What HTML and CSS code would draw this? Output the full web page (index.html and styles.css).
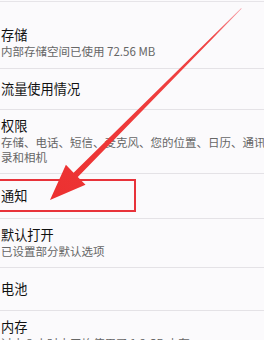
FILE: index.html
```html
<!DOCTYPE html>
<html lang="zh">
<head>
<meta charset="utf-8">
<link rel="stylesheet" href="styles.css">
</head>
<body>
<div class="screen">
  <div class="list">
    <div class="row row-first">
      <div class="title">存储</div>
      <div class="sub">内部存储空间已使用 72.56 MB</div>
    </div>
    <div class="row row-single">
      <div class="title">流量使用情况</div>
    </div>
    <div class="row">
      <div class="title">权限</div>
      <div class="sub">存储、电话、短信、麦克风、您的位置、日历、通讯录和相机</div>
    </div>
    <div class="row row-single row-tall">
      <div class="title">通知</div>
    </div>
    <div class="row">
      <div class="title">默认打开</div>
      <div class="sub">已设置部分默认选项</div>
    </div>
    <div class="row row-single row-mid">
      <div class="title">电池</div>
    </div>
    <div class="row row-last">
      <div class="title">内存</div>
      <div class="sub">过去 3 小时内平均使用了 1.2 GB 内存</div>
    </div>
  </div>
  <div class="highlight"></div>
  <svg class="arrow" width="264" height="340" viewBox="0 0 264 340">
    <defs>
      <linearGradient id="ag" x1="241" y1="9" x2="50" y2="200" gradientUnits="userSpaceOnUse">
        <stop offset="0" stop-color="#f8a0a8"/>
        <stop offset="0.15" stop-color="#f04545"/>
        <stop offset="1" stop-color="#ec3030"/>
      </linearGradient>
    </defs>
    <polygon fill="url(#ag)" points="241.8,8.6 77.8,177 85.5,184.8 50,200 65.9,164.8 73.6,172.7 241,8.2"/>
  </svg>
</div>
</body>
</html>
```

FILE: styles.css
```css
html, body {
  margin: 0;
  padding: 0;
  background: #fbfafc;
}
body {
  width: 264px;
  height: 340px;
  overflow: hidden;
  font-family: "Noto Sans CJK SC", "Noto Sans", sans-serif;
}
.screen {
  position: relative;
  width: 264px;
  height: 340px;
  overflow: hidden;
}
.list {
  width: 270px;
  border-top: 1px solid #e6e4e8;
  margin-top: 1px;
}
.row {
  display: flex;
  flex-direction: column;
  justify-content: center;
  box-sizing: border-box;
  padding: 7px 0 8px 1px;
  border-bottom: 1px solid #e4e2e6;
}
.row-first {
  padding-top: 24px;
  padding-bottom: 9px;
}
.row-single {
  min-height: 41px;
  padding-bottom: 7px;
}
.row-tall {
  min-height: 45px;
}
.row-mid {
  min-height: 43px;
}
.row-last {
  justify-content: flex-start;
}
.title {
  font-size: 13.2px;
  line-height: 18px;
  color: #111111;
}
.sub {
  font-size: 11.5px;
  line-height: 15px;
  color: #666666;
}
.highlight {
  position: absolute;
  left: -3px;
  top: 179px;
  width: 135px;
  height: 29px;
  border: 2px solid #e8323a;
}
.arrow {
  position: absolute;
  left: 0;
  top: 0;
}
```
